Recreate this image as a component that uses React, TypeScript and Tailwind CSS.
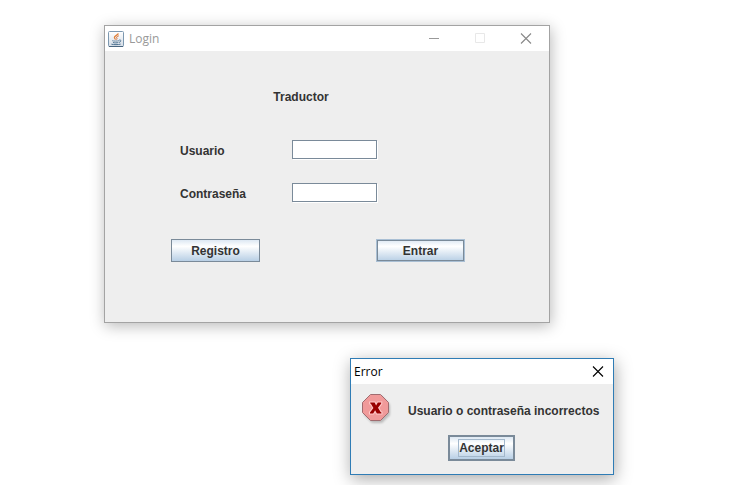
import type { FormEvent, ReactNode } from "react";

const labelFont = "font-['Liberation_Sans',Arial,sans-serif] text-xs leading-4 font-bold text-[#333333]";
const titleFont = "font-['Open_Sans','Noto_Sans',sans-serif] text-xs leading-4";
const metal = "bg-linear-to-b from-[#dde8f3] via-white via-30% to-[#b8cfe5]";

function CloseIcon() {
  return (
    <svg width="12" height="12" viewBox="0 0 12 12" fill="none" stroke="currentColor" aria-hidden="true">
      <path d="M1 0.5 L11 10.5 M11 0.5 L1 10.5" strokeWidth="1.1" />
    </svg>
  );
}

function JavaIcon() {
  return (
    <svg width="16" height="16" viewBox="0 0 16 16" fill="none" aria-hidden="true">
      <defs>
        <linearGradient id="java-face" x1="0" y1="0" x2="0" y2="1">
          <stop offset="0" stopColor="#ffffff" />
          <stop offset="1" stopColor="#d3dce6" />
        </linearGradient>
      </defs>
      <rect x="0.5" y="0.5" width="15" height="15" rx="1" fill="url(#java-face)" stroke="#7c98b0" />
      <path d="M1 15.5 H15" stroke="#49657f" />
      <path d="M10.4 2.6 C9.8 4.2 6 4.8 6.4 6.6 C6.6 7.3 7.4 7.6 7.3 8.6" stroke="#e0803a" strokeWidth="1.3" />
      <path d="M10.8 4.8 C9 5.4 8.2 6.2 8.8 7 C9.2 7.6 9 8.2 8.4 8.7" stroke="#d9682a" />
      <path d="M4.2 9.7 C5.5 10.2 9.5 10.2 11 9.7" stroke="#6b8aa5" />
      <path d="M5 11.5 C6.5 12 9 12 10.3 11.5" stroke="#4f7391" />
      <path d="M11.2 9 C13.6 8.6 13.4 10.8 11 11.4" stroke="#4f7391" />
      <path d="M3.4 13.2 C5.5 13.8 10.5 13.8 12.6 13.1" stroke="#4f7391" />
    </svg>
  );
}

function ErrorIcon() {
  return (
    <svg width="32" height="32" viewBox="0 0 32 32" aria-hidden="true">
      <defs>
        <filter id="soft" x="-20%" y="-20%" width="150%" height="150%">
          <feGaussianBlur stdDeviation="1.2" />
        </filter>
      </defs>
      <path d="M10 2 H20 L28 11 V21 L20 29 H10 L2 21 V11 Z" fill="#888888" opacity="0.5" filter="url(#soft)" />
      <path d="M8.5 0.5 H18.5 L26.5 8.5 V18.5 L18.5 26.5 H8.5 L0.5 18.5 V8.5 Z" fill="#f09a9a" stroke="#a06c70" />
      <path
        d="M8.2 8.5 H12.6 L14.1 11.4 L15.8 8.5 H19.2 V9.6 L16 13.7 L18.6 18 L19.4 18.4 V19.5 H14.9 L13.1 16.2 L11.2 19.5 H8 V18.4 L11.4 14 L8.9 9.8 L8.2 9.5 Z"
        fill="#990000"
        stroke="#ffc8c8"
        strokeWidth="2.2"
        paintOrder="stroke"
      />
    </svg>
  );
}

function Field({ id, label, type }: { id: string; label: string; type: string }) {
  return (
    <div className="flex h-5 items-center pl-[9px]">
      <label htmlFor={id} className={`w-28 pt-0.5 ${labelFont}`}>
        {label}
      </label>
      <input
        id={id}
        type={type}
        className="mb-px h-[19px] w-[85px] border border-[#7a8a99] bg-white px-0.5 text-xs text-[#333333] shadow-[1px_1px_0_#ffffff] outline-none"
      />
    </div>
  );
}

function TitleBar({ children, className }: { children: ReactNode; className: string }) {
  return <header className={`flex items-center bg-white ${titleFont} ${className}`}>{children}</header>;
}

export default function App() {
  const submit = (event: FormEvent) => event.preventDefault();

  return (
    <main className="relative min-h-screen overflow-hidden bg-white">
      <section
        aria-label="Login"
        className="absolute top-[25px] left-[104px] w-[446px] border border-[#a3a3a3] bg-[#eeeeee] shadow-[1px_3px_14px_rgba(0,0,0,0.28)]"
      >
        <TitleBar className="h-[25px] pr-[17px] pl-[3px] text-[#999999]">
          <JavaIcon />
          <h1 className="flex-1 pl-[5px]">Login</h1>
          <div className="flex items-center gap-[34px]">
            <button type="button" aria-label="Minimizar" className="text-[#999999]">
              <svg width="12" height="12" viewBox="0 0 12 12" stroke="currentColor" aria-hidden="true">
                <path d="M1 5.5 H11" />
              </svg>
            </button>
            <button type="button" aria-label="Maximizar" disabled className="text-[#e8e8e8]">
              <svg width="12" height="12" viewBox="0 0 12 12" fill="none" stroke="currentColor" aria-hidden="true">
                <path d="M1.5 0.5 H10.5 V9.5 H1.5 Z" />
              </svg>
            </button>
            <button type="button" aria-label="Cerrar" className="text-[#888888]">
              <CloseIcon />
            </button>
          </div>
        </TitleBar>
        <form onSubmit={submit} className="pt-[38px] pr-[84px] pb-[60px] pl-[66px]">
          <h2 className={`w-[260px] text-center ${labelFont}`}>Traductor</h2>
          <div className="mt-[35px] flex flex-col gap-[23px]">
            <Field id="usuario" label="Usuario" type="text" />
            <Field id="contrasena" label="Contraseña" type="password" />
          </div>
          <div className="mt-9 flex justify-between">
            <button type="button" className={`h-[23px] w-[89px] border border-[#7a8a99] ${metal} ${labelFont}`}>
              Registro
            </button>
            <button
              type="submit"
              className={`h-[23px] w-[89px] border border-[#a9bfd4] ${metal} ${labelFont} inset-ring inset-ring-[#7a8a99]`}
            >
              Entrar
            </button>
          </div>
        </form>
      </section>

      <section
        role="dialog"
        aria-label="Error"
        className="absolute top-[358px] left-[350px] w-[264px] border border-[#2f7cb5] bg-[#eeeeee] shadow-[1px_4px_16px_rgba(0,0,0,0.34)]"
      >
        <TitleBar className="h-[25px] justify-between pr-[9px] pl-[3px] text-black">
          <h2>Error</h2>
          <button type="button" aria-label="Cerrar">
            <CloseIcon />
          </button>
        </TitleBar>
        <div className="pt-[10px] pb-[13px]">
          <div className="flex items-center gap-[14px] pl-[11px]">
            <ErrorIcon />
            <p className={`pt-0.5 whitespace-nowrap ${labelFont}`}>Usuario o contraseña incorrectos</p>
          </div>
          <button
            type="button"
            className={`mt-[9px] ml-[97px] flex h-[26px] w-[67px] items-center justify-center border-2 border-[#7a8a99] ${metal} ${labelFont}`}
          >
            <span className="border border-[#a3b8cc] pt-px leading-[15px]">Aceptar</span>
          </button>
        </div>
      </section>
    </main>
  );
}
